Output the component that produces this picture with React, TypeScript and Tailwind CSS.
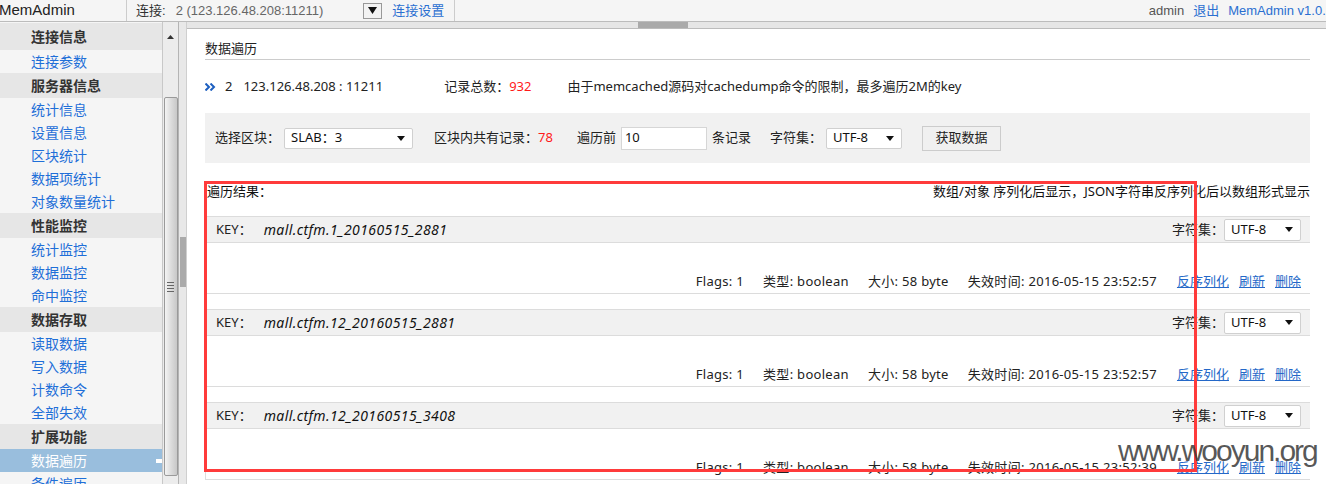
import React from "react";

const menu: { label: string; head?: boolean; active?: boolean; first?: boolean }[] = [
  { label: "连接信息", head: true, first: true },
  { label: "连接参数" },
  { label: "服务器信息", head: true },
  { label: "统计信息" },
  { label: "设置信息" },
  { label: "区块统计" },
  { label: "数据项统计" },
  { label: "对象数量统计" },
  { label: "性能监控", head: true },
  { label: "统计监控" },
  { label: "数据监控" },
  { label: "命中监控" },
  { label: "数据存取", head: true },
  { label: "读取数据" },
  { label: "写入数据" },
  { label: "计数命令" },
  { label: "全部失效" },
  { label: "扩展功能", head: true },
  { label: "数据遍历", active: true },
  { label: "条件遍历" },
];

const rows = [
  { key: "mall.ctfm.1_20160515_2881", exp: "2016-05-15 23:52:57" },
  { key: "mall.ctfm.12_20160515_2881", exp: "2016-05-15 23:52:57" },
  { key: "mall.ctfm.12_20160515_3408", exp: "2016-05-15 23:52:39" },
];

function Arrow() {
  return (
    <svg width="8" height="5" viewBox="0 0 8 5" className="shrink-0">
      <path d="M0 0h8L4 5z" fill="#111" />
    </svg>
  );
}

function Select({ text, className }: { text: string; className: string }) {
  return (
    <div
      className={`flex items-center justify-between bg-white border border-[#d0d0d0] rounded-[2px] pl-[6px] pr-[7px] text-[#111] ${className}`}
    >
      <span>{text}</span>
      <Arrow />
    </div>
  );
}

function Sidebar() {
  return (
    <div className="w-[163px] shrink-0 bg-[#f5f5f5] border-r border-[#c8c8c8] flex flex-col pt-[1px] text-[14px] font-['Noto_Sans_CJK_SC',sans-serif]">
      {menu.map((m) => (
        <div
          key={m.label}
          className={`relative flex items-center pl-[31px] shrink-0 ${
            m.head
              ? `${m.first ? "h-[27px]" : "h-[25px]"} bg-[#e6e6e6] font-bold text-[#333]`
              : m.active
              ? "h-[23px] bg-[#99bedd] text-white"
              : "h-[23px] text-[#1f6fd8]"
          }`}
        >
          {m.label}
          {m.active && <span className="absolute right-0 top-[10px] w-[6px] h-[4px] bg-white" />}
        </div>
      ))}
    </div>
  );
}

function Scrollbars() {
  return (
    <>
      <div className="w-[16px] shrink-0 bg-[#ececec] border-r border-[#b4b4b4] flex flex-col items-center">
        <div className="h-[75px] flex items-start pt-[13px]">
          <svg width="7" height="4" viewBox="0 0 7 4">
            <path d="M0 4h7L3.5 0z" fill="#333" />
          </svg>
        </div>
        <div className="w-[14px] h-[379px] rounded-[2px] border border-[#9a9a9a] bg-gradient-to-r from-[#f4f4f4] via-[#dcdcdc] to-[#c8c8c8] flex items-center justify-center">
          <div className="flex flex-col gap-[2px]">
            <span className="block w-[7px] h-[1px] bg-[#666]" />
            <span className="block w-[7px] h-[1px] bg-[#666]" />
            <span className="block w-[7px] h-[1px] bg-[#666]" />
            <span className="block w-[7px] h-[1px] bg-[#666]" />
          </div>
        </div>
      </div>
      <div className="w-[8px] shrink-0 bg-[#e8e8e8] border-r border-[#cfcfcf] flex flex-col pt-[215px] pl-[1px]">
        <div className="w-[6px] h-[50px] bg-[#aaaaaa]" />
      </div>
    </>
  );
}

function Item({ k, exp }: { k: string; exp: string }) {
  return (
    <div className="mb-[15px]">
      <div className="h-[27px] bg-[#f1f1f1] border-y border-[#dcdcdc] flex items-center pl-[11px] pr-[9px]">
        <span className="text-[#222]">KEY：</span>
        <span className="ml-[12px] italic text-[14px] tracking-[0.4px] text-[#111]">{k}</span>
        <div className="ml-auto flex items-center">
          <span className="text-[#222]">字符集：</span>
          <Select text="UTF-8" className="w-[77px] h-[22px]" />
        </div>
      </div>
      <div className="h-[51px] border-b border-l border-[#dcdcdc] flex items-end justify-end pb-[4px] pr-[9px] leading-[16px] text-[#222]">
        <span className="tracking-[0.3px]">Flags: 1</span>
        <span className="ml-[19px] tracking-[0.3px]">类型: boolean</span>
        <span className="ml-[19px] tracking-[0.3px]">大小: 58 byte</span>
        <span className="ml-[19px] tracking-[0.3px]">失效时间: {exp}</span>
        <a className="ml-[20px] text-[#2468c8] underline">反序列化</a>
        <a className="ml-[10px] text-[#2468c8] underline">刷新</a>
        <a className="ml-[10px] text-[#2468c8] underline">删除</a>
      </div>
    </div>
  );
}

function Content() {
  return (
    <div className="flex-1 flex flex-col min-w-0 bg-white">
      <div className="h-[7px] shrink-0 bg-[#e6e6e6] border-b border-[#bcbcbc] relative">
        <div className="absolute left-[451px] top-0 w-[50px] h-[6px] bg-[#aaaaaa]" />
      </div>
      <div className="pl-[18px] pr-[16px] text-[13px] font-['Noto_Sans','Noto_Sans_CJK_SC',sans-serif]">
        <div className="h-[31px] pt-[9px] border-b border-[#cccccc] text-[#222] leading-[20px]">数据遍历</div>
        <div className="h-[53px] flex items-center text-[#222]">
          <svg width="11" height="8" viewBox="0 0 11 8" className="shrink-0">
            <path d="M0.5 0.5L4 4L0.5 7.5M5.5 0.5L9 4L5.5 7.5" stroke="#1d5fc0" strokeWidth="2" fill="none" />
          </svg>
          <span className="ml-[9px]">2</span>
          <span className="ml-[11px]">123.126.48.208 : 11211</span>
          <span className="ml-[61px]">
            记录总数：<span className="text-[#ff1a1a]">932</span>
          </span>
          <span className="ml-[36px]">由于memcached源码对cachedump命令的限制，最多遍历2M的key</span>
        </div>
        <div className="h-[50px] bg-[#f1f1f1] flex items-center pl-[10px] text-[#222]">
          <span>选择区块：</span>
          <Select text="SLAB：3" className="ml-[4px] w-[129px] h-[21px]" />
          <span className="ml-[21px]">
            区块内共有记录：<span className="text-[#ff1a1a]">78</span>
          </span>
          <span className="ml-[24px]">遍历前</span>
          <div className="ml-[5px] w-[86px] h-[23px] bg-white border border-[#d6d6d6] flex items-center pl-[3px] text-[#111]">10</div>
          <span className="ml-[5px]">条记录</span>
          <span className="ml-[19px]">字符集：</span>
          <Select text="UTF-8" className="ml-[4px] w-[76px] h-[21px]" />
          <div className="ml-[20px] w-[79px] h-[25px] bg-[#f0f0f0] border border-[#cccccc] flex items-center justify-center text-[#222]">
            获取数据
          </div>
        </div>
        <div className="mt-[19px] mb-[14px] h-[20px] flex items-center pl-[2px] text-[#111]">
          <span>遍历结果：</span>
          <span className="ml-auto">数组/对象 序列化后显示，JSON字符串反序列化后以数组形式显示</span>
        </div>
        {rows.map((r) => (
          <Item key={r.key} k={r.key} exp={r.exp} />
        ))}
      </div>
    </div>
  );
}

export default function App() {
  return (
    <div className="relative w-[1326px] h-[484px] overflow-hidden flex flex-col bg-white">
      <div className="h-[22px] shrink-0 bg-[#f5f5f5] border-b border-[#bcbcbc] flex items-center text-[13px] font-['Liberation_Sans','Noto_Sans_CJK_SC',sans-serif] whitespace-nowrap">
        <div className="w-[127px] h-full border-r border-[#cccccc] flex items-center">
          <span className="ml-[-1px] text-[15px] text-[#222]">MemAdmin</span>
        </div>
        <span className="ml-[9px] text-[#333]">连接:</span>
        <span className="ml-[10px] text-[#666]">2 (123.126.48.208:11211)</span>
        <div className="ml-[40px] w-[19px] h-[16px] border border-[#999] bg-[#f3f3f3] flex items-center justify-center">
          <svg width="9" height="7" viewBox="0 0 9 7">
            <path d="M0 0h9L4.5 7z" fill="#111" />
          </svg>
        </div>
        <span className="ml-[10px] text-[#2a6fd1]">连接设置</span>
        <div className="ml-[10px] h-full border-r border-[#cccccc]" />
        <div className="ml-auto flex items-center mr-[-7px]">
          <span className="text-[#555]">admin</span>
          <span className="ml-[9px] text-[#2a6fd1]">退出</span>
          <span className="ml-[9px] text-[#2a6fd1]">MemAdmin v1.0.1</span>
        </div>
      </div>
      <div className="flex-1 flex min-h-0">
        <Sidebar />
        <Scrollbars />
        <Content />
      </div>
      <div className="absolute left-[204px] top-[181px] w-[993px] h-[291px] border-[3px] border-[#ff3b3b] pointer-events-none" />
      <div className="absolute left-[1118px] top-[436px] text-[30px] leading-none tracking-[-2px] text-[#3a3a3a]/85 font-['Liberation_Sans',sans-serif] pointer-events-none">
        www.wooyun.org
      </div>
    </div>
  );
}
